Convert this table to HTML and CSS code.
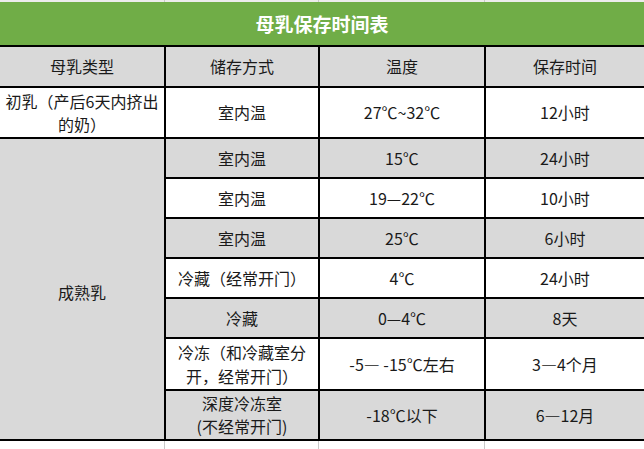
FILE: index.html
```html
<!DOCTYPE html>
<html lang="zh">
<head>
<meta charset="utf-8">
<title>母乳保存时间表</title>
<link rel="stylesheet" href="styles.css">
</head>
<body>
<div class="strip strip-top"><span></span><span></span><span></span><span></span></div>
<div class="table">
  <div class="title">母乳保存时间表</div>

  <div class="cell grey">母乳类型</div>
  <div class="cell grey">储存方式</div>
  <div class="cell grey">温度</div>
  <div class="cell grey">保存时间</div>

  <div class="cell white">初乳（产后6天内挤出<br>的奶）</div>
  <div class="cell white">室内温</div>
  <div class="cell white">27℃~32℃</div>
  <div class="cell white">12小时</div>

  <div class="cell grey mature">成熟乳</div>
  <div class="cell grey">室内温</div>
  <div class="cell grey">15℃</div>
  <div class="cell grey">24小时</div>

  <div class="cell white">室内温</div>
  <div class="cell white">19—22℃</div>
  <div class="cell white">10小时</div>

  <div class="cell grey">室内温</div>
  <div class="cell grey">25℃</div>
  <div class="cell grey">6小时</div>

  <div class="cell white">冷藏（经常开门）</div>
  <div class="cell white">4℃</div>
  <div class="cell white">24小时</div>

  <div class="cell grey">冷藏</div>
  <div class="cell grey">0—4℃</div>
  <div class="cell grey">8天</div>

  <div class="cell white tall">冷冻（和冷藏室分<br>开，经常开门）</div>
  <div class="cell white">-5— -15℃左右</div>
  <div class="cell white">3—4个月</div>

  <div class="cell grey">深度冷冻室<br>(不经常开门)</div>
  <div class="cell grey">-18℃以下</div>
  <div class="cell grey">6—12月</div>
</div>
<div class="strip strip-bottom"><span></span><span></span><span></span><span></span></div>
</body>
</html>
```

FILE: styles.css
```css
html, body {
  margin: 0;
  padding: 0;
  background: #ffffff;
}

body {
  width: 644px;
  height: 449px;
  overflow: hidden;
  font-family: "Noto Sans CJK SC", "Noto Sans", sans-serif;
  color: #1a1a1a;
}

.strip {
  display: grid;
  grid-template-columns: 165px 154px 166px 1fr;
}

.strip span {
  border-right: 1px solid #c9c9c9;
}

.strip span:last-child {
  border-right: none;
}

.strip-top {
  height: 2px;
  background: #ececec;
}

.strip-bottom {
  height: 8px;
  background: #ffffff;
}

.table {
  display: grid;
  grid-template-columns: 164px 152px 164px 158px;
  grid-template-rows: 43px 39px 49px 38px 38px 38px 38px 38px 50px 48px;
  gap: 2px;
  padding-bottom: 2px;
  background: #000000;
}

.title {
  grid-column: 1 / -1;
  background: #70ad47;
  color: #ffffff;
  font-weight: bold;
  font-size: 19px;
  display: flex;
  align-items: center;
  justify-content: center;
}

.cell {
  display: flex;
  align-items: center;
  justify-content: center;
  text-align: center;
  font-size: 16px;
  line-height: 23px;
  white-space: nowrap;
}

.cell.tall {
  line-height: 24px;
}

.grey {
  background: #d9d9d9;
}

.white {
  background: #ffffff;
}

.mature {
  grid-row: span 7;
  padding-top: 6px;
}
```
